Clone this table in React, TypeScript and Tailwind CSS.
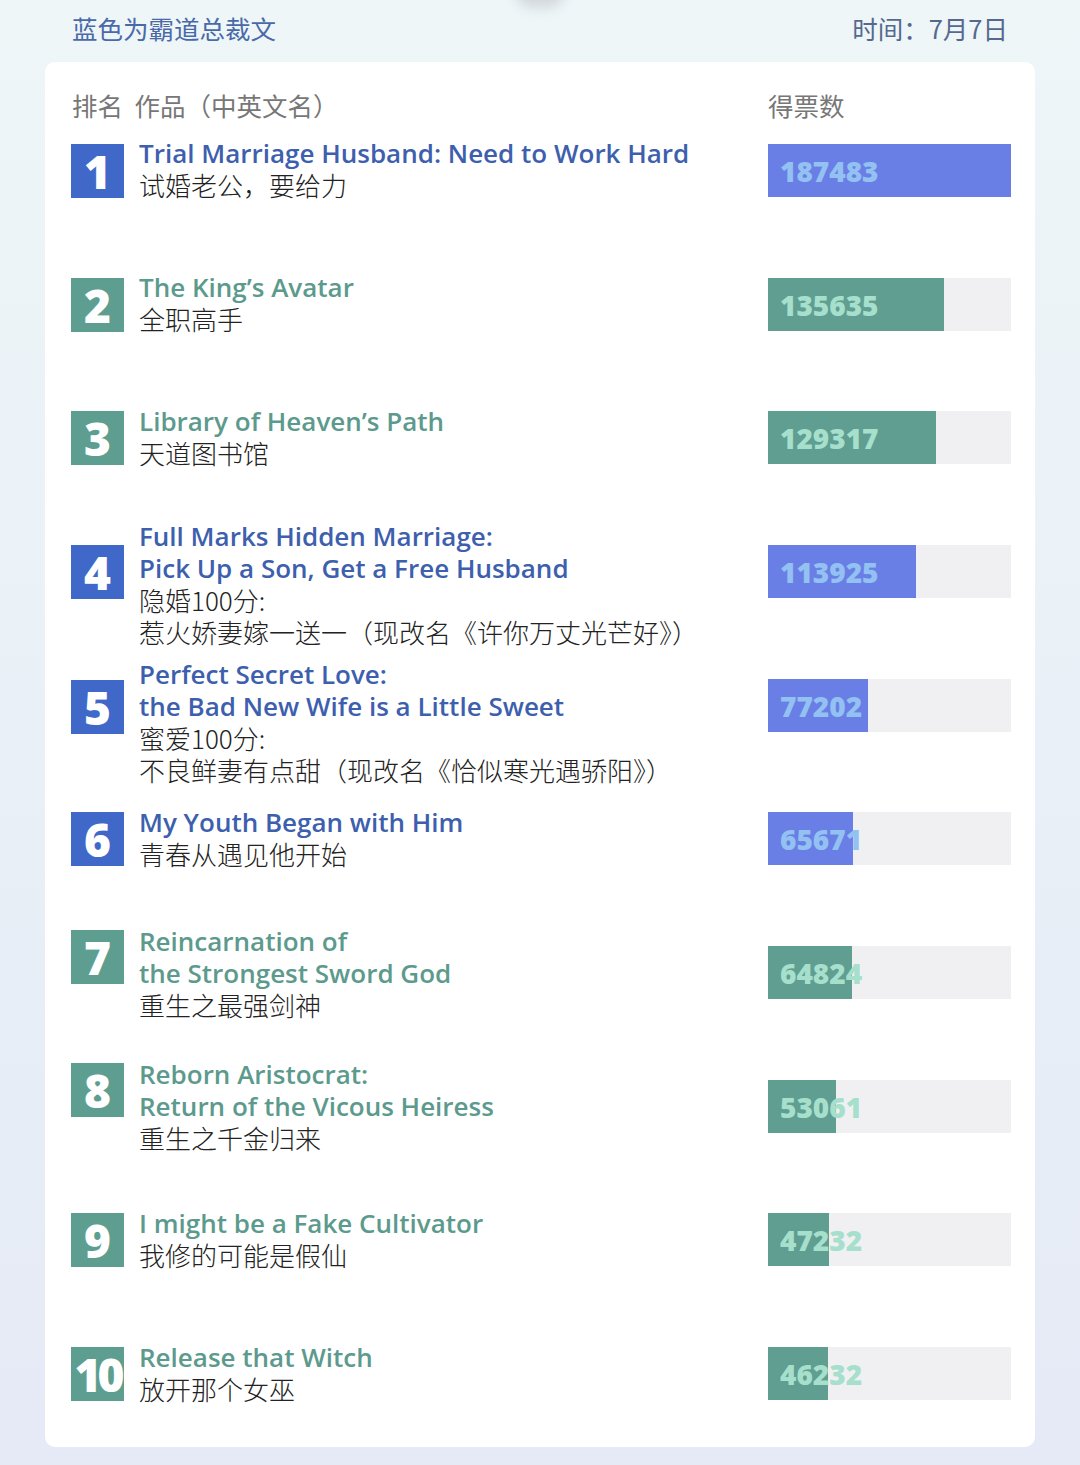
import React from "react";

type Row = {
  rank: number;
  en: string[];
  zh: string[];
  votes: string;
  fill: number;
  blue: boolean;
  h: string;
  textOff: string;
  boxOff: string;
};

const rows: Row[] = [
  { rank: 1, en: ["Trial Marriage Husband: Need to Work Hard"], zh: ["试婚老公，要给力"], votes: "187483", fill: 243, blue: true, h: "h-[134px]", textOff: "-mt-[7px]", boxOff: "mt-[7px]" },
  { rank: 2, en: ["The King’s Avatar"], zh: ["全职高手"], votes: "135635", fill: 176, blue: false, h: "h-[133px]", textOff: "-mt-[7px]", boxOff: "mt-[7px]" },
  { rank: 3, en: ["Library of Heaven’s Path"], zh: ["天道图书馆"], votes: "129317", fill: 168, blue: false, h: "h-[134px]", textOff: "-mt-[6px]", boxOff: "mt-[6px]" },
  { rank: 4, en: ["Full Marks Hidden Marriage:", "Pick Up a Son, Get a Free Husband"], zh: ["隐婚100分:", "惹火娇妻嫁一送一（现改名《许你万丈光芒好》）"], votes: "113925", fill: 148, blue: true, h: "h-[134px]", textOff: "-mt-[25px]", boxOff: "mt-[25px]" },
  { rank: 5, en: ["Perfect Secret Love:", "the Bad New Wife is a Little Sweet"], zh: ["蜜爱100分:", "不良鲜妻有点甜（现改名《恰似寒光遇骄阳》）"], votes: "77202", fill: 100, blue: true, h: "h-[133px]", textOff: "-mt-[21px]", boxOff: "mt-[22px]" },
  { rank: 6, en: ["My Youth Began with Him"], zh: ["青春从遇见他开始"], votes: "65671", fill: 85, blue: true, h: "h-[134px]", textOff: "-mt-[6px]", boxOff: "mt-[6px]" },
  { rank: 7, en: ["Reincarnation of", "the Strongest Sword God"], zh: ["重生之最强剑神"], votes: "64824", fill: 84, blue: false, h: "h-[134px]", textOff: "-mt-[21px]", boxOff: "mt-[5px]" },
  { rank: 8, en: ["Reborn Aristocrat:", "Return of the Vicous Heiress"], zh: ["重生之千金归来"], votes: "53061", fill: 68, blue: false, h: "h-[133px]", textOff: "-mt-[22px]", boxOff: "mt-[5px]" },
  { rank: 9, en: ["I might be a Fake Cultivator"], zh: ["我修的可能是假仙"], votes: "47232", fill: 61, blue: false, h: "h-[134px]", textOff: "-mt-[6px]", boxOff: "mt-[6px]" },
  { rank: 10, en: ["Release that Witch"], zh: ["放开那个女巫"], votes: "46232", fill: 60, blue: false, h: "h-[134px]", textOff: "-mt-[6px]", boxOff: "mt-[6px]" },
];

function RankRow({ r }: { r: Row }) {
  return (
    <div className={"flex " + r.h}>
      <div className={"flex w-[697px] items-start " + r.textOff}>
        <div
          className={
            "flex h-[54px] w-[53px] shrink-0 items-center justify-center text-white " +
            r.boxOff +
            " " +
            (r.blue ? "bg-[#3f68c9]" : "bg-[#5e9e91]")
          }
        >
          <span
            className={
              "font-['Open_Sans','Noto_Sans',sans-serif] text-[46px] font-extrabold leading-none " +
              (r.rank === 10 ? "tracking-[-4px]" : "")
            }
          >
            {r.rank}
          </span>
        </div>
        <div className="ml-[15px] flex flex-col">
          {r.en.map((t, i) => (
            <div
              key={i}
              className={
                "h-[32px] whitespace-nowrap font-['Open_Sans','Noto_Sans',sans-serif] text-[26px] font-semibold leading-[32px] " +
                (r.blue ? "text-[#3d5fae]" : "text-[#5c9a8d]")
              }
            >
              {t}
            </div>
          ))}
          {r.zh.map((t, i) => (
            <div
              key={i}
              className="h-[32px] whitespace-nowrap font-['Noto_Sans_CJK_SC','Noto_Sans',sans-serif] text-[26px] font-light leading-[32px] text-[#222]"
            >
              {t}
            </div>
          ))}
        </div>
      </div>
      <div className="relative h-[53px] w-[243px] bg-[#f0f0f2]">
        <div
          className={"h-full " + (r.blue ? "bg-[#6a7fe5]" : "bg-[#5f9e91]")}
          style={{ width: r.fill }}
        />
        <div
          className={
            "absolute left-[12px] top-0 flex h-full items-center font-['Open_Sans','Noto_Sans',sans-serif] text-[28px] font-extrabold " +
            (r.blue ? "text-[#93c2f2]" : "text-[#a6dfcb]")
          }
        >
          {r.votes}
        </div>
      </div>
    </div>
  );
}

export default function App() {
  return (
    <div className="relative h-[1465px] w-[1080px] overflow-hidden bg-gradient-to-b from-[#eef6f8] to-[#e5eaf6] font-['Noto_Sans_CJK_SC','Noto_Sans',sans-serif]">
      <div className="pointer-events-none absolute left-[515px] top-[-28px] h-[36px] w-[50px] rounded-full bg-[#d3d8dc] blur-[6px]" />
      <div className="flex h-[44px] items-start justify-between px-[72px] pt-[12px]">
        <div className="text-[25.5px] leading-[32px] text-[#4a69a8]">蓝色为霸道总裁文</div>
        <div className="text-[25.5px] leading-[32px] text-[#55698f]">时间：7月7日</div>
      </div>
      <div className="ml-[45px] mt-[18px] h-[1385px] w-[990px] rounded-[10px] bg-white pl-[26px] pr-[24px] pt-[27px]">
        <div className="flex h-[32px] items-center text-[25.5px] text-[#777]">
          <div className="w-[697px] pl-[1px]">排名&nbsp;&nbsp;作品（中英文名）</div>
          <div>得票数</div>
        </div>
        <div className="mt-[23px] flex flex-col">
          {rows.map((r) => (
            <RankRow key={r.rank} r={r} />
          ))}
        </div>
      </div>
    </div>
  );
}
